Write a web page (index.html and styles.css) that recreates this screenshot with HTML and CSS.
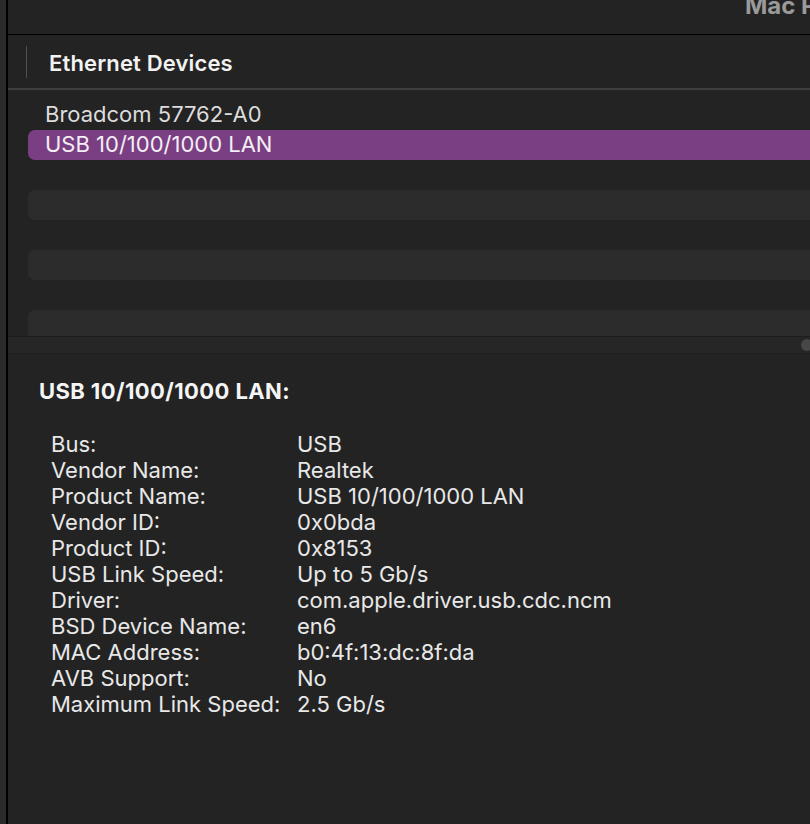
FILE: index.html
```html
<!DOCTYPE html>
<html>
<head>
<meta charset="utf-8">
<link rel="stylesheet" href="styles.css">
</head>
<body>
<div class="app">
  <div class="edge"></div>
  <div class="main">
    <div class="titlebar"><span class="title">Mac Pro</span></div>
    <div class="header">
      <div class="sep"></div>
      <div class="htext">Ethernet Devices</div>
    </div>
    <div class="list">
      <div class="row">Broadcom 57762-A0</div>
      <div class="row selected">USB 10/100/1000 LAN</div>
      <div class="row"></div>
      <div class="row stripe"></div>
      <div class="row"></div>
      <div class="row stripe"></div>
      <div class="row"></div>
      <div class="row stripe"></div>
    </div>
    <div class="scrollbar"><div class="knob"></div></div>
    <div class="detail">
      <div class="dtitle">USB 10/100/1000 LAN:</div>
      <div class="props">
        <div class="k">Bus:</div><div class="v">USB</div>
        <div class="k">Vendor Name:</div><div class="v">Realtek</div>
        <div class="k">Product Name:</div><div class="v">USB 10/100/1000 LAN</div>
        <div class="k">Vendor ID:</div><div class="v">0x0bda</div>
        <div class="k">Product ID:</div><div class="v">0x8153</div>
        <div class="k">USB Link Speed:</div><div class="v">Up to 5 Gb/s</div>
        <div class="k">Driver:</div><div class="v">com.apple.driver.usb.cdc.ncm</div>
        <div class="k">BSD Device Name:</div><div class="v">en6</div>
        <div class="k">MAC Address:</div><div class="v">b0:4f:13:dc:8f:da</div>
        <div class="k">AVB Support:</div><div class="v">No</div>
        <div class="k">Maximum Link Speed:</div><div class="v">2.5 Gb/s</div>
      </div>
    </div>
  </div>
</div>
</body>
</html>
```
FILE: styles.css
```css
html, body {
  margin: 0;
  padding: 0;
  background: #232323;
  width: 810px;
  height: 824px;
  overflow: hidden;
  font-family: Inter, "Noto Sans", "Liberation Sans", sans-serif;
}
.app {
  display: flex;
  height: 824px;
}
.edge {
  width: 6px;
  flex: none;
  background: #2b2b2b;
  border-right: 2px solid #000;
}
.main {
  flex: 1;
  min-width: 0;
  display: flex;
  flex-direction: column;
  overflow: hidden;
  background: #232323;
}
.titlebar {
  height: 34px;
  flex: none;
  border-bottom: 1px solid #000;
  overflow: hidden;
  white-space: nowrap;
  padding-left: 737px;
}
.title {
  display: block;
  font-weight: 700;
  font-size: 24px;
  line-height: 24px;
  margin-top: -6px;
  color: #9a9a9a;
}
.header {
  height: 53px;
  flex: none;
  display: flex;
  align-items: center;
  border-bottom: 2px solid #3e3e3e;
}
.sep {
  width: 1px;
  height: 32px;
  margin-left: 18px;
  background: #505050;
}
.htext {
  margin-left: 22px;
  margin-top: 2px;
  font-size: 22px;
  font-weight: 600;
  letter-spacing: 0.15px;
  color: #f2f2f2;
}
.list {
  flex: none;
  height: 246px;
  padding-top: 10px;
  box-sizing: border-box;
  overflow: hidden;
  padding-left: 20px;
}
.row {
  height: 30px;
  line-height: 28px;
  padding-left: 17px;
  margin-right: -20px;
  border-radius: 7px 0 0 7px;
  font-size: 22px;
  color: #dcdcdc;
  white-space: nowrap;
}
.row.selected {
  background: #7a3f82;
  color: #f4eef5;
}
.row.stripe {
  background: #2c2c2c;
}
.scrollbar {
  flex: none;
  height: 16px;
  background: #262626;
  border-top: 1px solid #1d1d1d;
  border-bottom: 1px solid #1d1d1d;
  display: flex;
  align-items: center;
  justify-content: flex-end;
}
.knob {
  width: 12px;
  height: 12px;
  border-radius: 6px;
  background: #474747;
  margin-right: -3px;
}
.detail {
  padding: 22px 0 0 31px;
  color: #e8e8e8;
}
.dtitle {
  font-size: 22px;
  font-weight: 700;
  line-height: 30px;
  letter-spacing: 0.4px;
  color: #f5f5f5;
}
.props {
  margin-top: 25px;
  margin-left: 12px;
  display: grid;
  grid-template-columns: 246px auto;
  font-size: 22px;
  line-height: 26px;
}
.k, .v {
  white-space: nowrap;
}
```
